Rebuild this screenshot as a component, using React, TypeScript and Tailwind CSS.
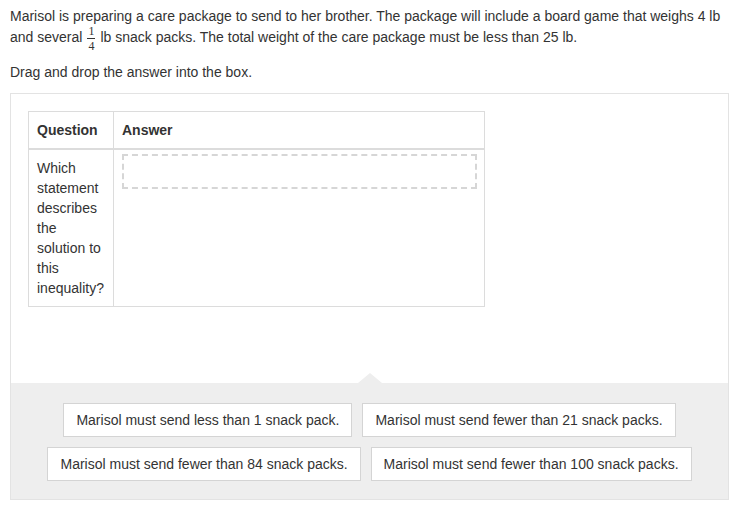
import React from "react";

const options = [
  ["Marisol must send less than 1 snack pack.", "Marisol must send fewer than 21 snack packs."],
  ["Marisol must send fewer than 84 snack packs.", "Marisol must send fewer than 100 snack packs."],
];

function Fraction() {
  return (
    <span className="inline-flex flex-col items-center align-middle mx-[5px] -my-[6px] text-[12px] leading-[10px] font-['Liberation_Serif',serif]">
      <span className="px-[1px] pb-[2px] border-b border-[#333]">1</span>
      <span className="px-[1px] pt-[2px]">4</span>
    </span>
  );
}

export default function App() {
  return (
    <div className="w-[742px] h-[512px] bg-white text-[#333] font-['Liberation_Sans',Arial,sans-serif] text-[14px] leading-[21px]">
      <div className="pt-[6px] pl-[10px] pr-[10px]">
        <p>
          Marisol is preparing a care package to send to her brother. The package will include a board game that weighs 4 lb and several
          <Fraction />
          lb snack packs. The total weight of the care package must be less than 25 lb.
        </p>
        <p className="mt-[14px]">Drag and drop the answer into the box.</p>
      </div>
      <div className="ml-[10px] mt-[10px] w-[719px] h-[407px] border border-[#e3e3e3] flex flex-col">
        <div className="flex-1 pt-[17px] pl-[17px]">
          <table className="w-[457px] border-collapse border border-[#dcdcdc] leading-[20px]">
            <thead>
              <tr className="border-b-2 border-[#dcdcdc]">
                <th className="w-[85px] text-left font-bold px-[8px] pt-[8px] pb-[8px] border-r border-[#dcdcdc]">Question</th>
                <th className="text-left font-bold px-[8px] pt-[8px] pb-[8px]">Answer</th>
              </tr>
            </thead>
            <tbody>
              <tr>
                <td className="align-top px-[8px] pt-[8px] pb-[8px] border-r border-[#dcdcdc]">
                  Which statement describes the solution to this inequality?
                </td>
                <td className="align-top pt-[4px] pl-[8px] pr-[7px]">
                  <div className="h-[35px] border-2 border-dashed border-[#d6d6d6]" />
                </td>
              </tr>
            </tbody>
          </table>
        </div>
        <div className="relative h-[116px] bg-[#eeeeee] pt-[20px] flex flex-col items-center gap-[10px]">
          <div className="absolute left-1/2 -translate-x-1/2 -top-[10px] w-0 h-0 border-l-[12px] border-r-[12px] border-b-[10px] border-l-transparent border-r-transparent border-b-[#eeeeee]" />
          {options.map((row, i) => (
            <div key={i} className="flex gap-[10px]">
              {row.map((o) => (
                <div key={o} className="h-[34px] px-[12px] flex items-center bg-white border border-[#d4d4d4] whitespace-nowrap">
                  {o}
                </div>
              ))}
            </div>
          ))}
        </div>
      </div>
    </div>
  );
}
